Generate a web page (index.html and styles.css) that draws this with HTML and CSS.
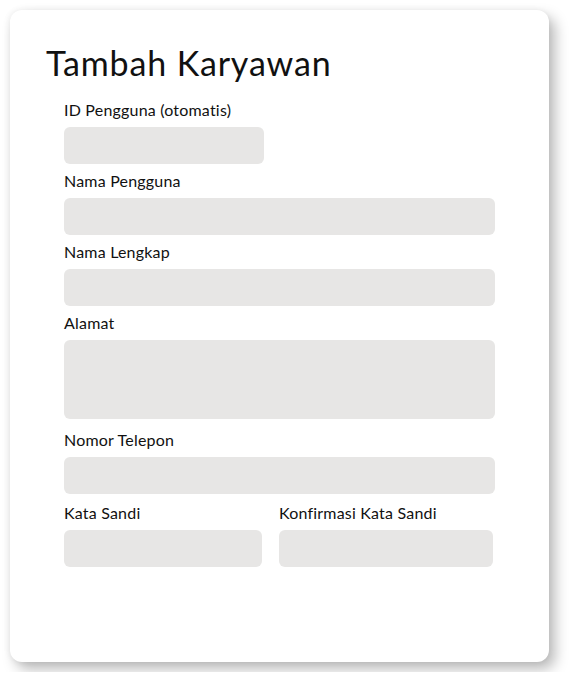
FILE: index.html
```html
<!DOCTYPE html>
<html lang="id">
<head>
<meta charset="utf-8">
<title>Tambah Karyawan</title>
<link rel="stylesheet" href="styles.css">
</head>
<body>
<div class="card">
  <h1 class="title">Tambah Karyawan</h1>
  <form class="form">
    <div class="field">
      <label class="label">ID Pengguna (otomatis)</label>
      <div class="input input-short"></div>
    </div>
    <div class="field">
      <label class="label">Nama Pengguna</label>
      <div class="input"></div>
    </div>
    <div class="field">
      <label class="label">Nama Lengkap</label>
      <div class="input"></div>
    </div>
    <div class="field">
      <label class="label">Alamat</label>
      <div class="input textarea"></div>
    </div>
    <div class="field">
      <label class="label">Nomor Telepon</label>
      <div class="input"></div>
    </div>
    <div class="row">
      <div class="field col-left">
        <label class="label">Kata Sandi</label>
        <div class="input"></div>
      </div>
      <div class="field col-right">
        <label class="label">Konfirmasi Kata Sandi</label>
        <div class="input"></div>
      </div>
    </div>
  </form>
</div>
</body>
</html>
```
FILE: styles.css
```css
html, body {
  margin: 0;
  padding: 0;
  background: #ffffff;
}
body {
  padding: 10px;
  font-family: Lato, "Open Sans", sans-serif;
  color: #111;
}
.card {
  box-sizing: border-box;
  width: 539px;
  height: 652px;
  background: #fff;
  border-radius: 12px;
  box-shadow: 6px 7px 14px rgba(0, 0, 0, 0.28), -1px 0 6px rgba(0,0,0,0.06);
  padding: 33px 54px 0 36px;
}
.title {
  margin: 0;
  font-weight: 400;
  font-size: 34px;
  line-height: 40px;
  letter-spacing: 0.85px;
}
.form {
  display: flex;
  flex-direction: column;
  gap: 7px;
  padding-left: 18px;
  margin-top: 17px;
}
.field {
  display: flex;
  flex-direction: column;
}
.label {
  font-size: 16px;
  line-height: 20px;
  height: 20px;
  letter-spacing: 0.2px;
  margin-bottom: 7px;
}
.input {
  height: 37px;
  background: #e7e6e5;
  border-radius: 6px;
}
.input-short { width: 200px; }
.textarea { height: 79px; margin-bottom: 4px; }
.row {
  display: flex;
  gap: 17px;
  margin-top: 2px;
}
.col-left { width: 198px; }
.col-right { width: 214px; }
```
